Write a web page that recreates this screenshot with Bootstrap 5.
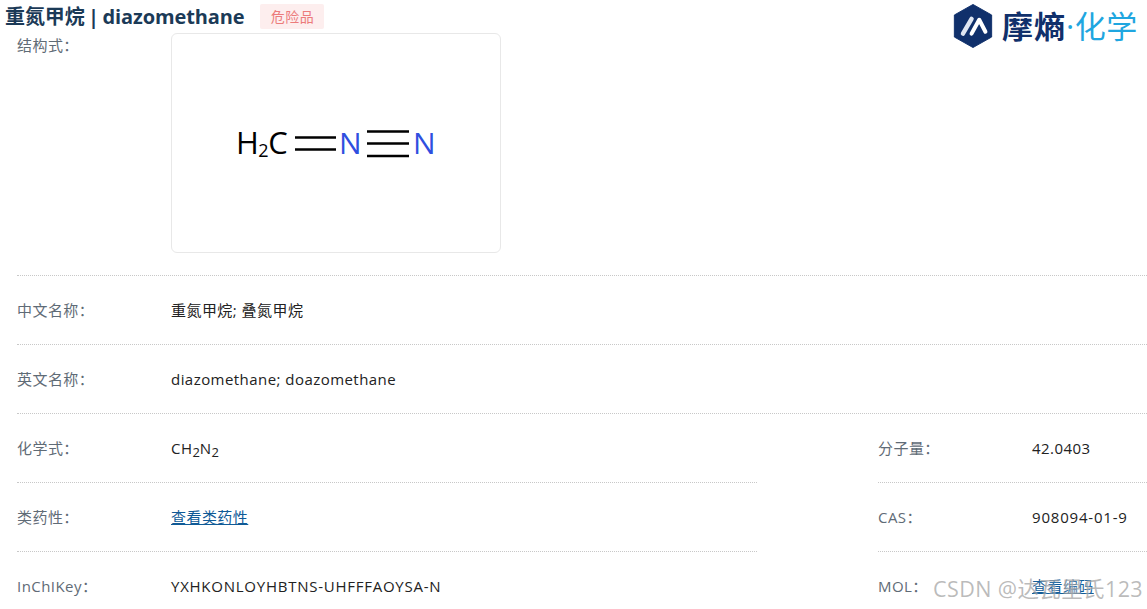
<!DOCTYPE html>
<html lang="zh">
<head>
<meta charset="utf-8">
<title>重氮甲烷</title>
<link rel="stylesheet" href="https://cdn.jsdelivr.net/npm/bootstrap@5.3.0/dist/css/bootstrap.min.css">
<style>
html,body{height:609px;overflow:hidden;background:#fff}
body{font-family:"Open Sans","Noto Sans CJK SC",sans-serif;font-size:15px;letter-spacing:.45px;color:#222;position:relative}
.head-bar{height:33px;padding-left:5px}
.head-title{font-size:20px;font-weight:700;color:#1b3a57;line-height:33px;margin:0;letter-spacing:-.12px;word-spacing:-1.5px}
.risk-tag{margin-left:16px;width:64px;height:25px;background:#fdeeee;color:#ec7b7b;font-size:14px;border-radius:2px}
.logo-box{position:absolute;top:4px;left:953px;gap:9px}
.logo-a{font-size:31px;line-height:44px;color:#10306b;font-weight:700;letter-spacing:1px}
.logo-b{color:#1fa6e0;font-weight:400;letter-spacing:.6px}
.info-wrap{padding-left:17px}
.info-line{border-bottom:1px dotted #c8c8c8;height:69px}
.struct-line{height:243px;border-bottom:1px dotted #c8c8c8}
.lab{width:154px;color:#5f6b76;flex:none}
.struct-lab{line-height:24px}
.struct-box{width:330px;height:220px;border:1px solid #e8e8e8;border-radius:6px}
.half-l{width:740px}
.half-r{width:269px;margin-left:121px}
.link-val{color:#0f5a96;text-decoration:underline}
.key-val{letter-spacing:.75px}
.cas-val{letter-spacing:.8px}
.val sub{font-size:13px;letter-spacing:0}
.mark-wm{position:absolute;left:933px;top:575px;font-size:21.5px;color:rgba(120,120,120,.5);line-height:28px;white-space:nowrap;letter-spacing:.4px;text-shadow:0 0 2px rgba(255,255,255,.8)}
</style>
</head>
<body>
<div class="head-bar d-flex align-items-center">
  <h1 class="head-title">重氮甲烷 | diazomethane</h1>
  <span class="risk-tag d-flex align-items-center justify-content-center">危险品</span>
</div>
<div class="logo-box d-flex align-items-center">
  <svg width="40" height="44" viewBox="0 0 41 46">
    <path d="M20.5 0.5 L40 11.5 V34.5 L20.5 45.5 L1 34.5 V11.5 Z" fill="#10306b" stroke="#10306b" stroke-linejoin="round"/>
    <path d="M10 31 L19 15.5" stroke="#dfe6f2" stroke-width="4.6" stroke-linecap="round"/>
    <path d="M19 31 L27 16.5 L33.5 29" stroke="#fff" stroke-width="4.2" stroke-linecap="round" stroke-linejoin="round" fill="none"/>
  </svg>
  <span class="logo-a">摩熵<span class="logo-b">·化学</span></span>
</div>
<div class="info-wrap">
  <div class="struct-line d-flex">
    <div class="lab struct-lab">结构式：</div>
    <div class="struct-box d-flex align-items-center justify-content-center">
      <svg width="210" height="50" viewBox="0 0 210 50">
        <text x="5" y="36" font-family="Open Sans, sans-serif" font-size="31" fill="#000" letter-spacing="-.5">H<tspan font-size="18" dy="3">2</tspan><tspan dy="-3">C</tspan></text>
        <path d="M64 19.5H105M64 31.5H105" stroke="#000" stroke-width="2.4"/>
        <text x="108" y="36" font-family="Open Sans, sans-serif" font-size="30" fill="#2f4fdf">N</text>
        <path d="M136 13.5H178M136 25.5H178M136 38H178" stroke="#000" stroke-width="2.4"/>
        <text x="182" y="36" font-family="Open Sans, sans-serif" font-size="30" fill="#2f4fdf">N</text>
      </svg>
    </div>
  </div>
  <div class="info-line d-flex align-items-center"><div class="lab">中文名称：</div><div class="val">重氮甲烷; 叠氮甲烷</div></div>
  <div class="info-line d-flex align-items-center"><div class="lab">英文名称：</div><div class="val">diazomethane; doazomethane</div></div>
  <div class="d-flex">
    <div class="half-l">
      <div class="info-line d-flex align-items-center"><div class="lab">化学式：</div><div class="val">CH<sub>2</sub>N<sub>2</sub></div></div>
      <div class="info-line d-flex align-items-center"><div class="lab">类药性：</div><a class="link-val" href="#">查看类药性</a></div>
      <div class="info-line d-flex align-items-center"><div class="lab">InChIKey：</div><div class="val key-val">YXHKONLOYHBTNS-UHFFFAOYSA-N</div></div>
    </div>
    <div class="half-r">
      <div class="info-line d-flex align-items-center"><div class="lab">分子量：</div><div class="val">42.0403</div></div>
      <div class="info-line d-flex align-items-center"><div class="lab">CAS：</div><div class="val cas-val">908094-01-9</div></div>
      <div class="info-line d-flex align-items-center"><div class="lab">MOL：</div><a class="link-val" href="#">查看编码</a></div>
    </div>
  </div>
</div>
<div class="mark-wm">CSDN @达瓦里氏123</div>
<script src="https://cdn.jsdelivr.net/npm/bootstrap@5.3.0/dist/js/bootstrap.bundle.min.js"></script>
</body>
</html>
